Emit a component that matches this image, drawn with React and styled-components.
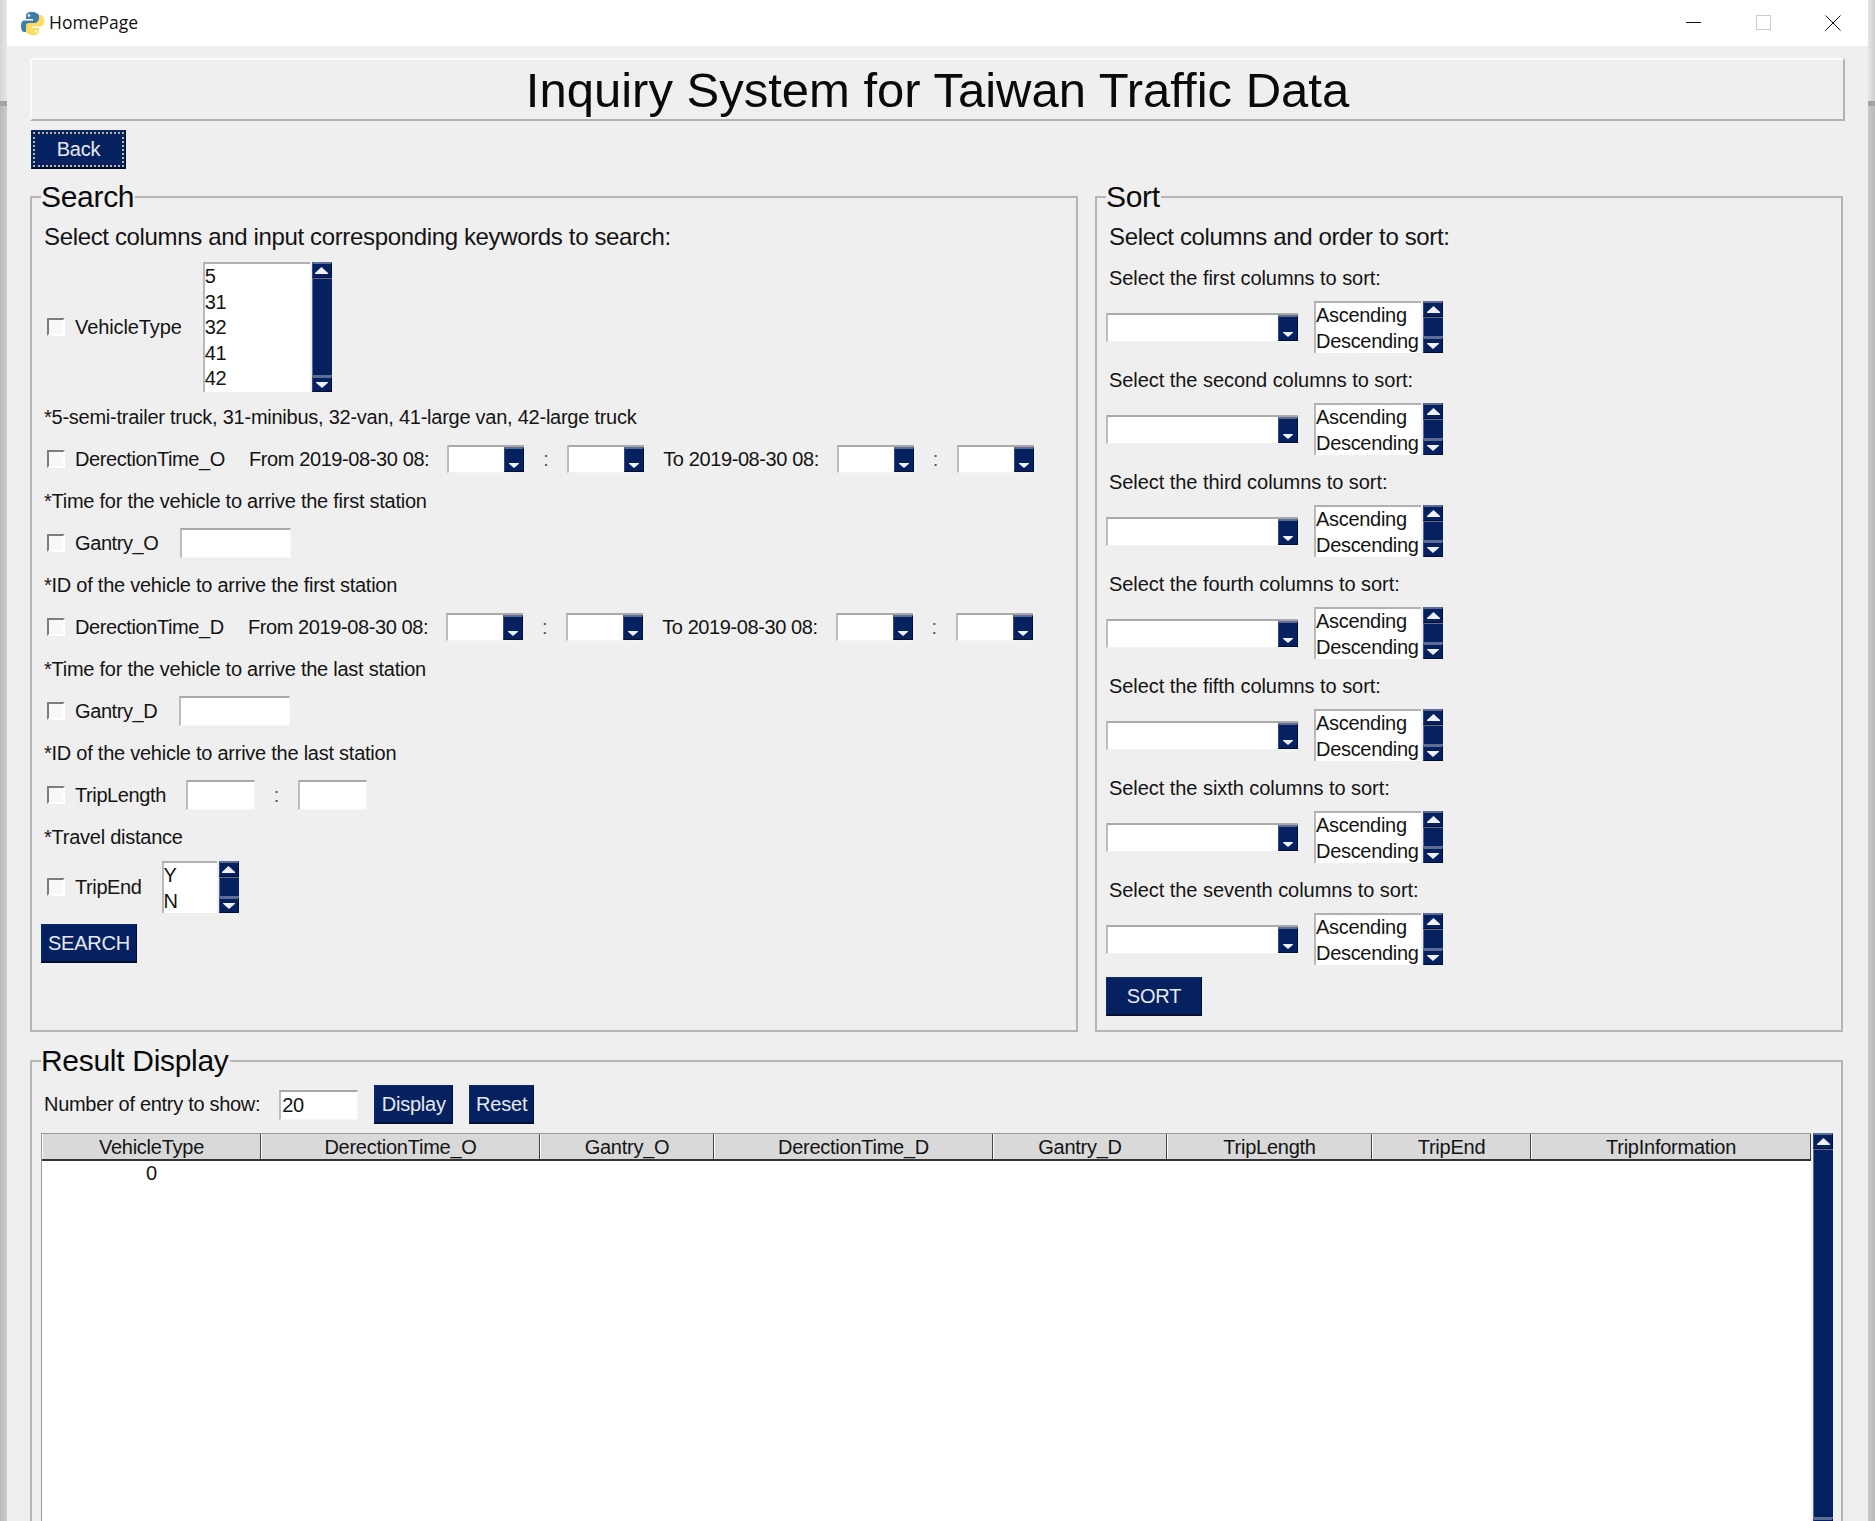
import React from "react";
import styled, { createGlobalStyle } from "styled-components";

const navy = "#06215f";
const font = `"Liberation Sans", Arial, sans-serif`;

const GlobalStyle = createGlobalStyle`
  html, body {
    margin: 0;
    padding: 0;
    background: #c0c0c0;
  }
  body {
    font-family: ${font};
    color: #141414;
  }
`;

const Desktop = styled.div`
  position: relative;
  width: 1875px;
  height: 1521px;
  overflow: hidden;
  padding: 0 7px;
  box-sizing: border-box;
  background: linear-gradient(to right, #b9b9b9 0, #cbcbcb 7px, #cbcbcb 1868px, #b7b7b7 1875px);
`;

const DesktopBand = styled.div`
  position: absolute;
  left: 0;
  right: 0;
  top: 0;
  height: 101px;
  background: linear-gradient(to right, #d4d4d4 0, #e6e6e6 7px, #e6e6e6 1868px, #cfcfcf 1875px);
  border-bottom: 5px solid #a2a2a2;
`;

const Window = styled.div`
  position: relative;
  height: 100%;
  background: #efefef;
`;

const TitleBar = styled.div`
  display: flex;
  align-items: center;
  height: 46px;
  background: #fff;
  padding-left: 14px;
`;

const AppName = styled.span`
  margin-left: 5px;
  margin-bottom: 2px;
  font-family: "Open Sans", sans-serif;
  font-size: 17.5px;
  color: #111;
`;

const WinButtons = styled.div`
  display: flex;
  margin-left: auto;
`;

const WinButton = styled.div`
  display: flex;
  align-items: center;
  justify-content: center;
  width: 70px;
  height: 46px;
  padding-bottom: 1px;
  box-sizing: border-box;
`;

const Main = styled.div`
  padding: 12px 25px 0 23px;
`;

const TitleBox = styled.div`
  box-sizing: border-box;
  height: 63px;
  display: flex;
  align-items: center;
  justify-content: center;
  border: 2px solid #fafafa;
  border-right-color: #b2b2b2;
  border-bottom-color: #b2b2b2;
  font-size: 49px;
  color: #0a0a0a;
  margin-right: -2px;
`;

const NavyButton = styled.button`
  box-sizing: border-box;
  display: block;
  width: ${(p) => p.$w}px;
  height: 39px;
  padding: 0;
  background: ${navy};
  color: #e6e9f0;
  font-family: ${font};
  font-size: 20px;
  letter-spacing: -0.2px;
  border: 1px solid #0d2a6b;
  border-right-color: #030f2e;
  border-bottom: 2px solid #030f2e;
  ${(p) => p.$focus && "outline: 2px dotted #b9b79a; outline-offset: -4px;"}
`;

const BackButton = styled(NavyButton)`
  margin-top: 9px;
  margin-left: 1px;
`;

const Panels = styled.div`
  display: grid;
  grid-template-columns: 1048px 748px;
  column-gap: 17px;
  height: 852px;
  margin-top: 11px;
`;

const Frame = styled.fieldset`
  box-sizing: border-box;
  min-width: 0;
  margin: 0;
  padding: 0 8px 0 9px;
  border: 2px solid #b5b5b5;
`;

const Legend = styled.legend`
  padding: 0 1px 0 0;
  height: 34px;
  line-height: 34px;
  font-size: 30px;
  letter-spacing: -0.3px;
  color: #0a0a0a;
`;

const Heading = styled.div`
  height: 30px;
  line-height: 30px;
  margin: 8px 0 ${(p) => p.$mb}px 3px;
  font-size: 24px;
  letter-spacing: -0.35px;
`;

const Row = styled.div`
  display: flex;
  align-items: center;
  height: 42px;
  font-size: 20px;
  letter-spacing: -0.4px;
  white-space: nowrap;
`;

const Note = styled(Row)`
  padding-left: 3px;
  letter-spacing: -0.25px;
`;

const ListRow = styled(Row)`
  height: ${(p) => p.$h}px;
  margin-top: ${(p) => p.$mt || 0}px;
`;

const CheckBox = styled.span`
  box-sizing: border-box;
  flex: none;
  width: 18px;
  height: 18px;
  margin-left: 6px;
  margin-right: 10px;
  background: #f8f8f8;
  border: 2px solid #fff;
  border-top-color: #7d7d7d;
  border-left-color: #7d7d7d;
`;

const Text = styled.span`
  margin-left: ${(p) => p.$ml || 0}px;
  ${(p) => p.$ls !== undefined && `letter-spacing: ${p.$ls}px;`}
`;

const Sep = styled.span`
  width: 43px;
  text-align: center;
  color: #555;
`;

const Entry = styled.div`
  box-sizing: border-box;
  flex: none;
  width: ${(p) => p.$w}px;
  height: 30px;
  margin-left: ${(p) => p.$ml || 0}px;
  padding-left: 1px;
  line-height: 27px;
  background: #fff;
  border: 1px solid #f6f6f6;
  border-top: 2px solid #a9a9a9;
  border-left: 2px solid #bdbdbd;
`;

const ComboBox = styled.div`
  box-sizing: border-box;
  flex: none;
  display: flex;
  justify-content: flex-end;
  width: ${(p) => p.$w}px;
  height: ${(p) => p.$h}px;
  margin-left: ${(p) => p.$ml || 0}px;
  background: #fff;
  border-top: 2px solid #a9a9a9;
  border-left: 2px solid #bdbdbd;
  border-bottom: 1px solid #f4f4f4;
`;

const ArrowButton = styled.div`
  box-sizing: border-box;
  flex: none;
  display: flex;
  align-items: ${(p) => p.$align || "center"};
  justify-content: center;
  width: 20px;
  height: ${(p) => (p.$h ? `${p.$h}px` : "auto")};
  padding-bottom: ${(p) => p.$pb || 0}px;
  background: ${navy};
  border-top: 2px solid #5e6d94;
  border-left: 1px solid #33497f;
  border-right: 1px solid #030f2e;
  border-bottom: 1px solid #030f2e;
`;

const ListBox = styled.div`
  flex: none;
  display: flex;
  height: 100%;
  margin-left: ${(p) => p.$ml || 0}px;
`;

const ListItems = styled.div`
  box-sizing: border-box;
  width: ${(p) => p.$w}px;
  height: 100%;
  padding-left: 0;
  margin-right: 2px;
  background: #fff;
  border-top: 2px solid #b0b0b0;
  border-left: 2px solid #b9b9b9;
  font-size: 20px;
  letter-spacing: -0.3px;
`;

const ListItem = styled.div`
  height: 25.5px;
  line-height: 25.5px;
`;

const Scrollbar = styled.div`
  flex: none;
  display: flex;
  flex-direction: column;
  width: 20px;
  height: 100%;
  background: ${navy};
  box-sizing: border-box;
`;

const ScrollThumb = styled.div`
  flex: 1;
  background: ${navy};
  border-top: 1px solid #5e6d94;
  border-left: 1px solid #5e6d94;
  border-bottom: 1px solid #5e6d94;
`;

const SearchButton = styled(NavyButton)`
  margin-top: 11px;
  margin-left: 0;
`;

const SortLabel = styled.div`
  height: 26px;
  line-height: 26px;
  margin-left: 3px;
  font-size: 20px;
  letter-spacing: -0.05px;
  white-space: nowrap;
`;

const SortGroup = styled.div`
  height: 102px;
`;

const SortRow = styled.div`
  display: flex;
  align-items: center;
  height: 52px;
  margin-top: 10px;
`;

const SortButton = styled(NavyButton)`
  margin-top: -2px;
`;

const ResultFrame = styled(Frame)`
  height: 520px;
  margin-top: 12px;
`;

const ResultBar = styled.div`
  display: flex;
  align-items: center;
  height: 39px;
  margin-top: 7px;
  font-size: 20px;
  letter-spacing: -0.3px;
`;

const ResultButton = styled(NavyButton)`
  margin-left: ${(p) => p.$ml}px;
  flex: none;
`;

const TableWrap = styled.div`
  display: flex;
  margin-top: 9px;
  height: 401px;
`;

const Table = styled.div`
  box-sizing: border-box;
  width: 1770px;
  background: #fff;
  border-left: 1px solid #9a9a9a;
  margin-right: 2px;
`;

const HeaderRow = styled.div`
  display: flex;
  height: 28px;
  border-top: 1px solid #9a9a9a;
  border-bottom: 2px solid #333;
  background: #d9d9d9;
  box-sizing: border-box;
`;

const HeaderCell = styled.div`
  box-sizing: border-box;
  flex: none;
  width: ${(p) => p.$w}px;
  text-align: center;
  line-height: 26px;
  font-size: 20px;
  letter-spacing: -0.25px;
  border-left: 1px solid #fff;
  border-right: 1px solid #444;
  white-space: nowrap;
`;

const DataRow = styled.div`
  display: flex;
  height: 24px;
  font-size: 20px;
  line-height: 24px;
`;

const DataCell = styled.div`
  width: ${(p) => p.$w}px;
  text-align: center;
`;

const Glyph = ({ dir = "down", w = 13, h = 7 }) => (
  <svg width={w} height={h} viewBox="0 0 13 7" fill="#eef1f7" preserveAspectRatio="none">
    {dir === "down" ? (
      <polygon points="0,0 13,0 13,1 6.5,7 0,1" />
    ) : (
      <polygon points="6.5,0 13,6 13,7 0,7 0,6" />
    )}
  </svg>
);

const Combo = ({ w = 77, h = 28, ml }) => (
  <ComboBox $w={w} $h={h} $ml={ml}>
    <ArrowButton $align="flex-end" $pb={3}>
      <Glyph w={10} h={5} />
    </ArrowButton>
  </ComboBox>
);

const VScroll = () => (
  <Scrollbar>
    <ArrowButton $h={16}>
      <Glyph dir="up" />
    </ArrowButton>
    <ScrollThumb />
    <ArrowButton $h={16}>
      <Glyph w={12} h={6} />
    </ArrowButton>
  </Scrollbar>
);

const List = ({ items, w, ml }) => (
  <ListBox $ml={ml}>
    <ListItems $w={w}>
      {items.map((it) => (
        <ListItem key={it}>{it}</ListItem>
      ))}
    </ListItems>
    <VScroll />
  </ListBox>
);

const Logo = () => (
  <svg width="23" height="23" viewBox="0 0 23 23">
    <path
      d="M11 0C6 0 5 2 5 4v3h7v1.500H3C1 8.500 0 11 0 14s1 6 3 6h2v-3c0-3 2-5 5-5h5c2 0 3-1 3-3V4c0-2-3-4-7-4z"
      fill="#3f7cad"
    />
    <path
      d="M12 23c5 0 6-2 6-4v-3h-7v-1.500h9c2 0 3-2.500 3-5.500s-1-6-3-6h-2v3c0 3-2 5-5 5H8c-2 0-3 1-3 3v5c0 2 3 4 7 4z"
      fill="#ffdc5e"
    />
    <circle cx="8" cy="3.500" r="1.300" fill="#fff" />
    <circle cx="15" cy="19.500" r="1.300" fill="#fff" />
  </svg>
);

const ordinals = ["first", "second", "third", "fourth", "fifth", "sixth", "seventh"];
const columns = [
  ["VehicleType", 219],
  ["DerectionTime_O", 279],
  ["Gantry_O", 174],
  ["DerectionTime_D", 279],
  ["Gantry_D", 174],
  ["TripLength", 205],
  ["TripEnd", 159],
  ["TripInformation", 280],
];

const TimeFilter = ({ name }) => (
  <Row>
    <CheckBox />
    <Text>{name}</Text>
    <Text $ml={24}>From 2019-08-30 08:</Text>
    <Combo ml={18} />
    <Sep>:</Sep>
    <Combo />
    <Text $ml={19}>To 2019-08-30 08:</Text>
    <Combo ml={18} />
    <Sep>:</Sep>
    <Combo />
  </Row>
);

export default function App() {
  return (
    <>
      <GlobalStyle />
      <Desktop>
        <DesktopBand />
        <Window>
          <TitleBar>
            <Logo />
            <AppName>HomePage</AppName>
            <WinButtons>
              <WinButton>
                <svg width="15" height="15">
                  <path d="M0 7.500H15" stroke="#111" strokeWidth="1" />
                </svg>
              </WinButton>
              <WinButton>
                <svg width="15" height="15">
                  <rect x="0.500" y="0.500" width="14" height="14" fill="none" stroke="#ccc" />
                </svg>
              </WinButton>
              <WinButton>
                <svg width="16" height="16">
                  <path d="M0.500 0.500L15.500 15.500M15.500 0.500L0.500 15.500" stroke="#111" strokeWidth="1" />
                </svg>
              </WinButton>
            </WinButtons>
          </TitleBar>
          <Main>
            <TitleBox>Inquiry System for Taiwan Traffic Data</TitleBox>
            <BackButton $w={95} $focus>
              Back
            </BackButton>
            <Panels>
              <Frame>
                <Legend>Search</Legend>
                <Heading $mb={10}>Select columns and input corresponding keywords to search:</Heading>
                <ListRow $h={130}>
                  <CheckBox />
                  <Text $ls={-0.1}>VehicleType</Text>
                  <List items={["5", "31", "32", "41", "42"]} w={107} ml={21} />
                </ListRow>
                <ListRow $h={4} />
                <Note>*5-semi-trailer truck, 31-minibus, 32-van, 41-large van, 42-large truck</Note>
                <TimeFilter name="DerectionTime_O" />
                <Note>*Time for the vehicle to arrive the first station</Note>
                <Row>
                  <CheckBox />
                  <Text>Gantry_O</Text>
                  <Entry $w={111} $ml={21} />
                </Row>
                <Note>*ID of the vehicle to arrive the first station</Note>
                <TimeFilter name="DerectionTime_D" />
                <Note>*Time for the vehicle to arrive the last station</Note>
                <Row>
                  <CheckBox />
                  <Text>Gantry_D</Text>
                  <Entry $w={111} $ml={22} />
                </Row>
                <Note>*ID of the vehicle to arrive the last station</Note>
                <Row>
                  <CheckBox />
                  <Text>TripLength</Text>
                  <Entry $w={69} $ml={20} />
                  <Sep>:</Sep>
                  <Entry $w={69} />
                </Row>
                <Note>*Travel distance</Note>
                <ListRow $h={52} $mt={3}>
                  <CheckBox />
                  <Text>TripEnd</Text>
                  <List items={["Y", "N"]} w={55} ml={20} />
                </ListRow>
                <SearchButton $w={96}>SEARCH</SearchButton>
              </Frame>
              <Frame>
                <Legend>Sort</Legend>
                <Heading $mb={13}>Select columns and order to sort:</Heading>
                {ordinals.map((o) => (
                  <SortGroup key={o}>
                    <SortLabel>{`Select the ${o} columns to sort:`}</SortLabel>
                    <SortRow>
                      <Combo w={192} h={29} />
                      <List items={["Ascending", "Descending"]} w={107} ml={16} />
                    </SortRow>
                  </SortGroup>
                ))}
                <SortButton $w={96}>SORT</SortButton>
              </Frame>
            </Panels>
            <ResultFrame>
              <Legend>Result Display</Legend>
              <ResultBar>
                <Text $ml={3}>Number of entry to show:</Text>
                <Entry $w={79} $ml={19}>20</Entry>
                <ResultButton $w={79} $ml={16}>Display</ResultButton>
                <ResultButton $w={65} $ml={16}>Reset</ResultButton>
              </ResultBar>
              <TableWrap>
                <Table>
                  <HeaderRow>
                    {columns.map(([name, w]) => (
                      <HeaderCell key={name} $w={w}>{name}</HeaderCell>
                    ))}
                  </HeaderRow>
                  <DataRow>
                    <DataCell $w={219}>0</DataCell>
                  </DataRow>
                </Table>
                <VScroll />
              </TableWrap>
            </ResultFrame>
          </Main>
        </Window>
      </Desktop>
    </>
  );
}
